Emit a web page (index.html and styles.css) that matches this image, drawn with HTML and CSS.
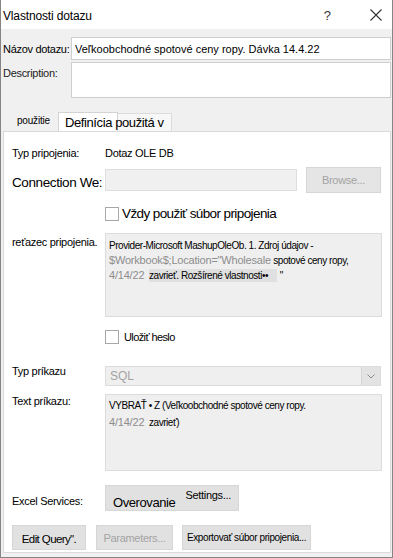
FILE: index.html
```html
<!DOCTYPE html>
<html lang="sk">

<head>
    <meta charset="UTF-8">
    <meta name="viewport" content="width=device-width, initial-scale=1.0">
    <title>Vlastnosti dotazu</title>
    <link rel="stylesheet" href="styles.css">
</head>

<body>
    <div class="dialog">
        <div class="titlebar">
            <span class="title">Vlastnosti dotazu</span>
            <span class="help">?</span>
            <svg class="close" width="12" height="12" viewBox="0 0 12 12">
                <path d="M0.5 0.5 L11.5 11.5 M11.5 0.5 L0.5 11.5" stroke="#333" stroke-width="1.1" fill="none" />
            </svg>
        </div>
        <div class="content">
            <div class="prop-row">
                <span class="prop-label">Názov dotazu:</span>
                <div class="box name">Veľkoobchodné spotové ceny ropy. Dávka 14.4.22</div>
            </div>
            <div class="prop-row desc">
                <span class="prop-label">Description:</span>
                <div class="box tall"></div>
            </div>
            <div class="tabs">
                <div class="tab first">použitie</div>
                <div class="tab active"><span>Definícia použitá v</span></div>
                <div class="tab empty"></div>
            </div>
            <div class="panel">
                <div class="row r-type">
                    <span class="label">Typ pripojenia:</span>
                    <span class="value">Dotaz OLE DB</span>
                </div>
                <div class="row r-file">
                    <span class="label big">Connection We:</span>
                    <div class="field disabled"></div>
                    <div class="btn browse">Browse...</div>
                </div>
                <div class="row r-check1">
                    <span></span>
                    <label class="check"><span class="checkbox"></span><span class="check-text big">Vždy použiť súbor pripojenia</span></label>
                </div>
                <div class="row r-conn">
                    <span class="label top">reťazec pripojenia.</span>
                    <div class="area conn">
                        <div class="line">Provider-Microsoft MashupOleOb. 1. Zdroj údajov -</div>
                        <div class="line"><span class="grey">$Workbook$;Location="Wholesale</span> spotové ceny ropy,</div>
                        <div class="line"><span class="grey">4/14/22</span>&nbsp; <span class="mark">zavrieť. Rozšírené vlastnosti••&nbsp;&nbsp;&nbsp;&nbsp;</span> "</div>
                    </div>
                </div>
                <div class="row r-check2">
                    <span></span>
                    <label class="check"><span class="checkbox"></span><span class="check-text small">Uložiť heslo</span></label>
                </div>
                <div class="row r-cmdtype">
                    <span class="label">Typ príkazu</span>
                    <div class="select">
                        <span class="select-text">SQL</span>
                        <span class="select-arrow">
                            <svg width="8" height="5" viewBox="0 0 8 5">
                                <path d="M0.5 0.5 L4 4 L7.5 0.5" stroke="#8a8a8a" stroke-width="1" fill="none" />
                            </svg>
                        </span>
                    </div>
                </div>
                <div class="row r-cmd">
                    <span class="label top2">Text príkazu:</span>
                    <div class="area cmd">
                        <div class="line">VYBRAŤ • Z (Veľkoobchodné spotové ceny ropy.</div>
                        <div class="line"><span class="grey">4/14/22</span>&nbsp; zavrieť)</div>
                    </div>
                </div>
                <div class="row r-excel">
                    <span class="label low">Excel Services:</span>
                    <div class="btn auth"><span class="auth-main">Overovanie</span><span class="auth-sub">Settings...</span></div>
                </div>
                <div class="actions">
                    <div class="btn edit">Edit Query".</div>
                    <div class="btn params">Parameters...</div>
                    <div class="btn export">Exportovať súbor pripojenia...</div>
                </div>
            </div>
        </div>
    </div>
</body>

</html>
```

FILE: styles.css
```css
body {
    margin: 0;
    font-family: "Liberation Sans", Arial, sans-serif;
    font-size: 11px;
    color: #000;
}

.dialog {
    width: 393px;
    height: 558px;
    box-sizing: border-box;
    border: 1px solid #858585;
    border-top: none;
    display: flex;
    flex-direction: column;
    background-color: #f0f0f0;
}

.titlebar {
    height: 29px;
    flex-shrink: 0;
    display: flex;
    align-items: center;
    background-color: #fff;
    padding-left: 2px;
}

.title {
    font-size: 12px;
    letter-spacing: -0.15px;
    flex: 1;
    padding-top: 2px;
}

.help {
    font-size: 13px;
    color: #333;
    margin-right: 39px;
    padding-top: 1px;
}

.close {
    margin-right: 10px;
}

.content {
    flex: 1;
    display: flex;
    flex-direction: column;
    padding: 8px 1px 4px 2px;
}

.prop-row {
    display: grid;
    grid-template-columns: 68px 1fr;
    align-items: center;
}

.prop-row.desc {
    margin-top: 2px;
    align-items: start;
}

.prop-label {
    letter-spacing: -0.3px;
    white-space: nowrap;
}

.desc .prop-label {
    padding-top: 5px;
    color: #222;
}

.box {
    background-color: #fff;
    border: 1px solid #cfcfcf;
    box-sizing: border-box;
    height: 23px;
    display: flex;
    align-items: center;
    padding-left: 3px;
    white-space: nowrap;
    overflow: hidden;
}

.box.tall {
    height: 36px;
}

/* tabs */
.tabs {
    height: 33px;
    display: flex;
    align-items: flex-end;
}

.tab {
    box-sizing: border-box;
    white-space: nowrap;
}

.tab.first {
    width: 55px;
    height: 19px;
    padding-left: 14px;
    font-size: 10px;
    letter-spacing: -0.2px;
    line-height: 17px;
}

.tab.active {
    width: 60px;
    height: 19px;
    background-color: #fff;
    border: 1px solid #d4d4d4;
    border-bottom: none;
    font-size: 13px;
    letter-spacing: -0.4px;
    padding-left: 6px;
    line-height: 19px;
    position: relative;
    z-index: 1;
}

.tab.empty {
    width: 54px;
    height: 18px;
    border: 1px solid #dcdcdc;
    border-bottom: none;
    border-left: none;
    background-color: #f7f7f7;
}

.panel {
    flex: 1;
    background-color: #fff;
    border: 1px solid #dadada;
    padding: 0 8px 0 8px;
}

.row {
    display: grid;
    grid-template-columns: 93px 1fr;
    align-items: center;
}

.label {
    white-space: nowrap;
    letter-spacing: -0.3px;
}

.label.big {
    font-size: 13.5px;
    letter-spacing: -0.4px;
}

.label.top {
    align-self: start;
    padding-top: 3px;
}

.label.top2 {
    align-self: start;
    padding-top: 1px;
}

.label.low {
    padding-top: 6px;
}

.value {
    letter-spacing: -0.3px;
}

.r-type {
    margin-top: 13px;
    height: 16px;
}

.r-file {
    margin-top: 6px;
    grid-template-columns: 93px 192px 1fr;
}

.r-file .label {
    padding-top: 5px;
}

.field {
    height: 22px;
    box-sizing: border-box;
    border: 1px solid #dedede;
    background-color: #f0f0f0;
}

.btn {
    box-sizing: border-box;
    background-color: #e1e1e1;
    border: 1px solid #d6d6d6;
    display: flex;
    align-items: center;
    justify-content: center;
    white-space: nowrap;
}

.browse {
    margin-left: 9px;
    width: 75px;
    height: 26px;
    background-color: #e5e5e5;
    color: #a3a3a3;
    letter-spacing: -0.3px;
}

.r-check1 {
    margin-top: 13px;
}

.r-check2 {
    margin-top: 13px;
}

.check {
    display: flex;
    align-items: center;
    gap: 3px;
}

.checkbox {
    width: 14px;
    height: 14px;
    box-sizing: border-box;
    border: 1px solid #a8a8a8;
    background-color: #fff;
}

.check-text {
    white-space: nowrap;
}

.check-text.big {
    font-size: 13.5px;
    letter-spacing: -0.6px;
}

.check-text.small {
    padding-left: 2px;
    letter-spacing: -0.6px;
}

.r-conn {
    margin-top: 12px;
}

.area {
    box-sizing: border-box;
    background-color: #efefef;
    border: 1px solid #dcdcdc;
    padding: 4px 3px;
    white-space: nowrap;
    overflow: hidden;
    width: 277px;
}

.line {
    font-size: 10px;
    letter-spacing: -0.45px;
}

.area.conn {
    height: 84px;
}

.area.conn .line {
    height: 15px;
    line-height: 15px;
}

.grey {
    color: #8d8d8d;
    font-size: 11px;
    letter-spacing: -0.2px;
}

.mark {
    background-color: #e0e0e0;
    padding: 1px 0;
}

.r-cmdtype {
    margin-top: 21px;
}

.r-cmdtype .label {
    padding-bottom: 10px;
}

.select {
    width: 276px;
    height: 20px;
    box-sizing: border-box;
    border: 1px solid #dcdcdc;
    background-color: #efefef;
    display: flex;
}

.select-text {
    flex: 1;
    color: #a3a3a3;
    font-size: 12px;
    padding-left: 4px;
    line-height: 18px;
}

.select-arrow {
    width: 18px;
    background-color: #e3e3e3;
    border-left: 1px solid #d6d6d6;
    display: flex;
    align-items: center;
    justify-content: center;
}

.r-cmd {
    margin-top: 7px;
}

.area.cmd {
    height: 77px;
    padding-top: 2px;
}

.area.cmd .line {
    height: 17px;
    line-height: 17px;
}

.r-excel {
    margin-top: 14px;
}

.auth {
    width: 134px;
    height: 26px;
    align-items: flex-start;
    gap: 10px;
}

.auth-main {
    font-size: 13px;
    letter-spacing: -0.4px;
    padding-top: 9px;
}

.auth-sub {
    letter-spacing: -0.3px;
    padding-top: 3px;
}

.actions {
    margin-top: 14px;
    display: flex;
}

.actions .btn {
    height: 25px;
}

.edit {
    width: 74px;
    font-size: 11.5px;
    letter-spacing: -0.6px;
    padding-top: 2px;
}

.params {
    width: 77px;
    margin-left: 10px;
    color: #a3a3a3;
    letter-spacing: -0.3px;
}

.export {
    width: 129px;
    margin-left: 9px;
    font-size: 10px;
    letter-spacing: -0.4px;
}
```
